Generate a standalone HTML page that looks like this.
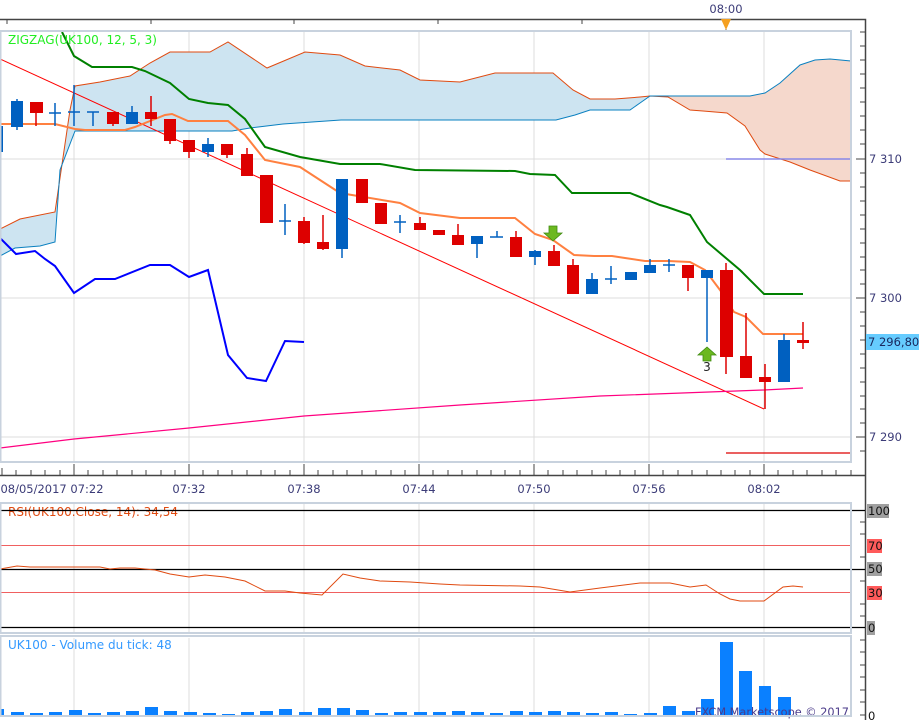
<!DOCTYPE html>
<html><head><meta charset="utf-8"><style>
html,body{margin:0;padding:0;background:#fff;width:923px;height:720px;overflow:hidden}
svg{display:block;font-family:"DejaVu Sans","Liberation Sans",sans-serif}
</style></head><body>
<svg width="923" height="720" viewBox="0 0 923 720" xmlns="http://www.w3.org/2000/svg">
<rect width="923" height="720" fill="#fff"/>
<text x="726" y="13" font-size="11.5" fill="#3c3c78" text-anchor="middle">08:00</text>
<path d="M0 19.5H865.5V720" stroke="#444" stroke-width="1.5" fill="none"/>
<path d="M7 19v5M151 19v5M294 19v5M438 19v5M582 19v5M726 19v12" stroke="#444" stroke-width="1"/>
<path d="M721 19h10l-5 11z" fill="#f5a020"/>
<g>
<rect x="0" y="31" width="851" height="431" fill="#fff"/>
<path d="M74 32V462M189 32V462M304 32V462M419 32V462M534 32V462M649 32V462M764 32V462M0 159H851M0 298H851M0 437H851" stroke="#dcdcdc" stroke-width="1"/>
<polygon fill="#cde4f1" points="0,229 20,219 55,212 70,110 75,86 100,82 130,76 150,63 170,52 210,52 228,42 267,68 305,52 340,55 365,66 400,70 420,80 460,82 495,73 553,73 573,90 590,99 615,99 640,97 650,96 640,103 630,110 590,110 575,115 556,120 400,120 341,120 283,124 250,128 232,131 75,131 60,170 55,242 40,246 15,248 0,256"/>
<polygon fill="#f5d8cc" points="650,96 668,97 690,110 703,111 727,113 745,126 760,150 765,154 790,162 810,170 840,181 851,181 851,61 830,59 815,60 800,65 780,83 765,93 750,96"/>
<polyline fill="none" stroke="#e04a10" stroke-width="1" points="0,229 20,219 55,212 70,110 75,86 100,82 130,76 150,63 170,52 210,52 228,42 267,68 305,52 340,55 365,66 400,70 420,80 460,82 495,73 553,73 573,90 590,99 615,99 640,97 650,96 668,97 690,110 703,111 727,113 745,126 760,150 765,154 790,162 810,170 840,181 851,181"/>
<polyline fill="none" stroke="#0a80c0" stroke-width="1" points="0,256 15,248 40,246 55,242 60,170 75,131 232,131 250,128 283,124 341,120 556,120 575,115 590,110 630,110 640,103 650,96 750,96 765,93 780,83 800,65 815,60 830,59 851,61"/>
<line x1="726" y1="159" x2="851" y2="159" stroke="#8888e8" stroke-width="1.5"/>
<line x1="726" y1="453" x2="851" y2="453" stroke="#dd0000" stroke-width="1.2"/>
<polyline fill="none" stroke="#ff0000" stroke-width="1" points="0,59 764,409"/>
<polyline fill="none" stroke="#ff0080" stroke-width="1.2" points="0,448 74,439 189,428 304,416 460,405 600,396 764,390 803,388"/>
<polyline fill="none" stroke="#0000ff" stroke-width="2" points="0,238 16,254 35,251 45,259 55,266 74,293 95,279 115,279 150,265 170,265 189,277 208,270 228,355 247,378 266,381 285,341 304,342"/>
<polyline fill="none" stroke="#008000" stroke-width="2" points="62,32 74,56 92,67 132,67 145,71 170,83 189,99 208,103 228,105 245,119 265,147 300,157 340,164 380,164 415,170 515,171 530,174 555,175 572,193 630,193 660,205 667,207 690,215 707,242 740,270 764,294 803,294"/>
<polyline fill="none" stroke="#ff8040" stroke-width="2" points="0,124 55,124 75,129 85,130 125,130 135,127 165,115 172,114 188,121 228,121 245,135 265,160 300,167 320,180 340,193 400,203 420,213 460,218 515,218 535,234 553,240 574,255 594,256 612,256 625,258 645,261 668,261 690,262 705,270 720,290 734,312 746,317 763,334 803,334"/>
<g stroke-width="1.5">
<g stroke="#0060c0" fill="#0060c0">
<rect x="-4" y="126" width="7" height="26" stroke="none"/>
<line x1="17" y1="99" x2="17" y2="130"/><rect x="11" y="101" width="12" height="26" stroke="none"/>
<line x1="55" y1="103" x2="55" y2="126"/><line x1="49" y1="113" x2="61" y2="113"/>
<line x1="74" y1="85" x2="74" y2="126"/><line x1="68" y1="112" x2="80" y2="112"/>
<line x1="93" y1="112" x2="93" y2="126"/><line x1="87" y1="112" x2="99" y2="112"/>
<line x1="132" y1="106" x2="132" y2="124"/><rect x="126" y="112" width="12" height="12" stroke="none"/>
<line x1="208" y1="138" x2="208" y2="157"/><rect x="202" y="144" width="12" height="8" stroke="none"/>
<line x1="285" y1="204" x2="285" y2="235"/><line x1="279" y1="221" x2="291" y2="221"/>
<line x1="342" y1="179" x2="342" y2="258"/><rect x="336" y="179" width="12" height="70" stroke="none"/>
<line x1="400" y1="215" x2="400" y2="233"/><line x1="394" y1="222" x2="406" y2="222"/>
<line x1="477" y1="236" x2="477" y2="258"/><rect x="471" y="236" width="12" height="8" stroke="none"/>
<line x1="497" y1="231" x2="497" y2="237"/><line x1="490" y1="237" x2="503" y2="237"/>
<line x1="535" y1="250" x2="535" y2="265"/><rect x="529" y="251" width="12" height="6" stroke="none"/>
<line x1="592" y1="273" x2="592" y2="294"/><rect x="586" y="279" width="12" height="15" stroke="none"/>
<line x1="611" y1="266" x2="611" y2="284"/><line x1="605" y1="279" x2="617" y2="279"/>
<rect x="625" y="272" width="12" height="8" stroke="none"/>
<line x1="650" y1="259" x2="650" y2="273"/><rect x="644" y="265" width="12" height="8" stroke="none"/>
<line x1="669" y1="259" x2="669" y2="272"/><line x1="663" y1="265" x2="675" y2="265"/>
<line x1="707" y1="270" x2="707" y2="342"/><rect x="701" y="270" width="12" height="8" stroke="none"/>
<line x1="784" y1="334" x2="784" y2="382"/><rect x="778" y="340" width="12" height="42" stroke="none"/>
</g>
<g stroke="#dd0000" fill="#dd0000">
<line x1="36" y1="102" x2="36" y2="126"/><rect x="30" y="102" width="13" height="11" stroke="none"/>
<line x1="113" y1="112" x2="113" y2="126"/><rect x="107" y="112" width="12" height="12" stroke="none"/>
<line x1="151" y1="96" x2="151" y2="126"/><rect x="145" y="112" width="12" height="7" stroke="none"/>
<line x1="170" y1="119" x2="170" y2="144"/><rect x="164" y="119" width="12" height="22" stroke="none"/>
<line x1="189" y1="140" x2="189" y2="158"/><rect x="183" y="140" width="12" height="12" stroke="none"/>
<line x1="227" y1="144" x2="227" y2="158"/><rect x="221" y="144" width="12" height="11" stroke="none"/>
<line x1="247" y1="148" x2="247" y2="176"/><rect x="241" y="154" width="12" height="22" stroke="none"/>
<rect x="260" y="175" width="13" height="48" stroke="none"/>
<line x1="304" y1="217" x2="304" y2="244"/><rect x="298" y="221" width="12" height="22" stroke="none"/>
<line x1="323" y1="215" x2="323" y2="250"/><rect x="317" y="242" width="12" height="7" stroke="none"/>
<rect x="356" y="179" width="12" height="24" stroke="none"/>
<rect x="375" y="203" width="12" height="21" stroke="none"/>
<line x1="420" y1="217" x2="420" y2="230"/><rect x="414" y="223" width="12" height="7" stroke="none"/>
<rect x="433" y="230" width="12" height="5" stroke="none"/>
<line x1="458" y1="224" x2="458" y2="245"/><rect x="452" y="235" width="12" height="10" stroke="none"/>
<line x1="516" y1="231" x2="516" y2="257"/><rect x="510" y="237" width="12" height="20" stroke="none"/>
<line x1="554" y1="245" x2="554" y2="266"/><rect x="548" y="251" width="12" height="15" stroke="none"/>
<line x1="573" y1="259" x2="573" y2="294"/><rect x="567" y="265" width="12" height="29" stroke="none"/>
<line x1="688" y1="265" x2="688" y2="291"/><rect x="682" y="265" width="12" height="13" stroke="none"/>
<line x1="726" y1="263" x2="726" y2="374"/><rect x="720" y="270" width="13" height="87" stroke="none"/>
<line x1="746" y1="313" x2="746" y2="378"/><rect x="740" y="356" width="12" height="22" stroke="none"/>
<line x1="765" y1="364" x2="765" y2="409"/><rect x="759" y="377" width="12" height="5" stroke="none"/>
<line x1="803" y1="322" x2="803" y2="349"/><rect x="797" y="340" width="12" height="3" stroke="none"/>
</g>
</g>
<path d="M549 226h8v7h5l-9 8-9-8h5z" fill="#6cb820" stroke="#3f8a10" stroke-width="0.8"/>
<path d="M707 347l-9 8h5v6h8v-6h5z" fill="#6cb820" stroke="#3f8a10" stroke-width="0.8"/>
<text x="707" y="371" font-size="12" fill="#222" text-anchor="middle">3</text>
<text x="8" y="44" font-size="12" fill="#22ee22">ZIGZAG(UK100, 12, 5, 3)</text>
<rect x="0.5" y="31" width="850.5" height="431" fill="none" stroke="#c8d2de" stroke-width="2"/>
</g>
<path d="M860 32h5M860 46h5M860 60h5M860 74h5M860 88h5M860 102h5M860 116h5M860 130h5M860 144h5M856 159h9M860 173h5M860 187h5M860 201h5M860 215h5M860 229h5M860 243h5M860 257h5M860 270h5M860 284h5M856 298h9M860 312h5M860 326h5M860 340h5M860 354h5M860 368h5M860 382h5M860 396h5M860 409h5M860 423h5M856 437h9M860 451h5" stroke="#444" stroke-width="1"/>
<g font-size="11.5" fill="#3c3c78">
<text x="869" y="163">7 310</text>
<text x="869" y="302">7 300</text>
<text x="869" y="441">7 290</text>
</g>
<rect x="866" y="334" width="53" height="16" fill="#66ccff"/>
<text x="868" y="346" font-size="11.5" fill="#1a2a60">7 296,80</text>
<path d="M0 475.5H865" stroke="#444" stroke-width="1.5"/>
<path d="M2 468v7M16 470v5M31 470v5M45 470v5M60 470v5M88 470v5M103 470v5M117 470v5M132 470v5M146 470v5M161 470v5M175 470v5M203 470v5M218 470v5M232 470v5M247 470v5M261 470v5M275 470v5M290 470v5M318 470v5M333 470v5M347 470v5M362 470v5M376 470v5M391 470v5M405 470v5M433 470v5M448 470v5M462 470v5M477 470v5M491 470v5M505 470v5M520 470v5M548 470v5M563 470v5M577 470v5M592 470v5M606 470v5M620 470v5M635 470v5M663 470v5M678 470v5M692 470v5M707 470v5M721 470v5M735 470v5M750 470v5M778 470v5M793 470v5M807 470v5M822 470v5M836 470v5M851 470v5M74 464v11M189 464v11M304 464v11M419 464v11M534 464v11M649 464v11M764 464v11" stroke="#444" stroke-width="1"/>
<g font-size="11.5" fill="#3c3c78" text-anchor="middle">
<text x="52" y="493">08/05/2017 07:22</text>
<text x="189" y="493">07:32</text>
<text x="304" y="493">07:38</text>
<text x="419" y="493">07:44</text>
<text x="534" y="493">07:50</text>
<text x="649" y="493">07:56</text>
<text x="764" y="493">08:02</text>
</g>
<path d="M74 504V633M189 504V633M304 504V633M419 504V633M534 504V633M649 504V633M764 504V633" stroke="#dcdcdc"/>
<text x="8" y="516" font-size="12" fill="#e04a10">RSI(UK100.Close, 14): 34,54</text>
<path d="M0 510.5H865M0 569.5H865M0 627.5H865" stroke="#000" stroke-width="1.2"/>
<path d="M0 545.5H851M0 592.5H851" stroke="#f06060" stroke-width="1"/>
<polyline fill="none" stroke="#e04a10" stroke-width="1" points="0,569 17,566 30,567 100,567 110,569 120,568 135,568 145,569 155,570 170,574 189,577 205,575 225,577 245,581 265,591 285,591 300,593 322,595 343,574 360,578 380,581 410,582 440,584 460,585 520,586 540,587 570,592 600,588 640,583 670,583 690,587 706,585 720,594 730,599 740,601 764,601 783,587 793,586 803,587"/>
<rect x="0.5" y="503" width="850.5" height="130" fill="none" stroke="#c8d2de" stroke-width="2"/>
<path d="M860 522h5M860 534h5M860 557h5M860 581h5M860 604h5M860 616h5" stroke="#444"/>
<g font-size="11.5" fill="#111">
<rect x="867" y="504" width="22" height="14" fill="#a0a0a0"/><text x="868" y="515">100</text>
<rect x="867" y="539" width="15" height="14" fill="#ff5a5a"/><text x="868" y="550">70</text>
<rect x="867" y="562" width="15" height="14" fill="#a0a0a0"/><text x="868" y="573">50</text>
<rect x="867" y="586" width="15" height="14" fill="#ff5a5a"/><text x="868" y="597">30</text>
<rect x="867" y="621" width="8" height="14" fill="#a0a0a0"/><text x="868" y="632">0</text>
</g>
<path d="M74 638V716M189 638V716M304 638V716M419 638V716M534 638V716M649 638V716M764 638V716" stroke="#dcdcdc"/>
<text x="8" y="649" font-size="12" fill="#3399ff">UK100 - Volume du tick: 48</text>
<g fill="#0a80ff">
<rect x="0" y="709" width="4" height="6"/><rect x="11" y="712" width="13" height="3"/><rect x="30" y="713" width="13" height="2"/><rect x="49" y="712" width="13" height="3"/><rect x="69" y="710" width="13" height="5"/><rect x="88" y="713" width="13" height="2"/><rect x="107" y="712" width="13" height="3"/><rect x="126" y="711" width="13" height="4"/><rect x="145" y="707" width="13" height="8"/><rect x="164" y="711" width="13" height="4"/><rect x="184" y="712" width="13" height="3"/><rect x="203" y="713" width="13" height="2"/><rect x="222" y="714" width="13" height="1"/><rect x="241" y="712" width="13" height="3"/><rect x="260" y="711" width="13" height="4"/><rect x="279" y="709" width="13" height="6"/><rect x="299" y="712" width="13" height="3"/><rect x="318" y="708" width="13" height="7"/><rect x="337" y="708" width="13" height="7"/><rect x="356" y="710" width="13" height="5"/><rect x="375" y="713" width="13" height="2"/><rect x="394" y="712" width="13" height="3"/><rect x="414" y="712" width="13" height="3"/><rect x="433" y="712" width="13" height="3"/><rect x="452" y="711" width="13" height="4"/><rect x="471" y="712" width="13" height="3"/><rect x="490" y="713" width="13" height="2"/><rect x="510" y="711" width="13" height="4"/><rect x="529" y="712" width="13" height="3"/><rect x="548" y="711" width="13" height="4"/><rect x="567" y="712" width="13" height="3"/><rect x="586" y="713" width="13" height="2"/><rect x="605" y="712" width="13" height="3"/><rect x="624" y="714" width="13" height="1"/><rect x="644" y="713" width="13" height="2"/><rect x="663" y="706" width="13" height="9"/><rect x="682" y="711" width="13" height="4"/>
<rect x="701" y="699" width="13" height="16"/><rect x="720" y="642" width="13" height="73"/><rect x="739" y="671" width="13" height="44"/><rect x="759" y="686" width="12" height="29"/><rect x="778" y="697" width="13" height="18"/>
</g>
<text x="695" y="716" font-size="11.5" fill="#4a3a8a" textLength="154" lengthAdjust="spacingAndGlyphs">FXCM Marketscope © 2017</text>
<rect x="0.5" y="636" width="850.5" height="80" fill="none" stroke="#c8d2de" stroke-width="2"/>
<path d="M860 640h5M860 652h5M860 665h5M860 677h5M860 690h5M860 702h5M860 715h5" stroke="#444"/>
<text x="868" y="720" font-size="11.5" fill="#111">0</text>
</svg>
</body></html>
